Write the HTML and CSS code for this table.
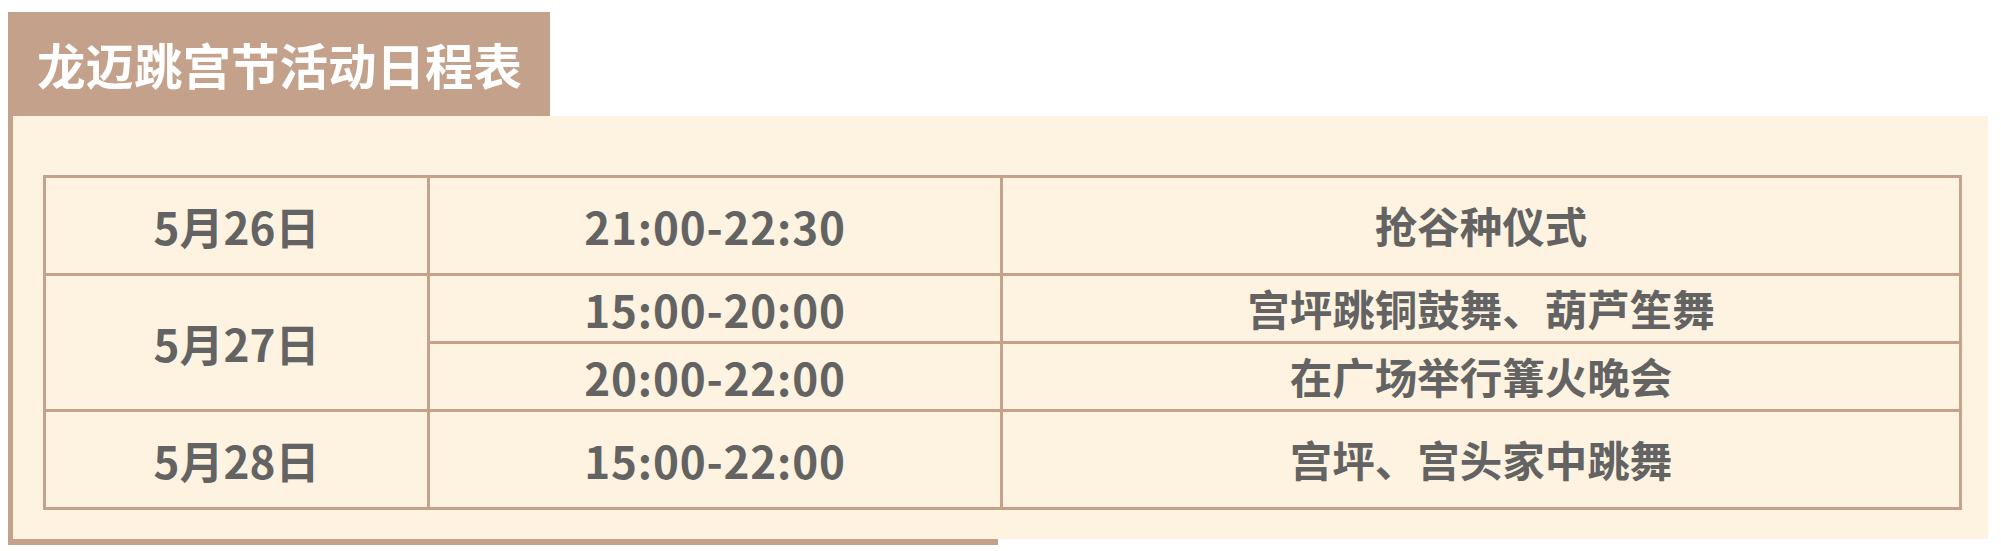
FILE: index.html
```html
<!DOCTYPE html>
<html lang="zh-CN">
<head>
<meta charset="utf-8">
<title>龙迈跳宫节活动日程表</title>
<link rel="stylesheet" href="styles.css">
</head>
<body>
<div class="page">
  <div class="title">龙迈跳宫节活动日程表</div>
  <div class="frame">
    <div class="panel">
      <table class="schedule">
        <colgroup>
          <col class="c-date">
          <col class="c-time">
          <col class="c-act">
        </colgroup>
        <tbody>
          <tr class="tall">
            <td class="date">5月26日</td>
            <td class="time">21:00-22:30</td>
            <td class="act">抢谷种仪式</td>
          </tr>
          <tr class="short">
            <td class="date" rowspan="2">5月27日</td>
            <td class="time">15:00-20:00</td>
            <td class="act">宫坪跳铜鼓舞、葫芦笙舞</td>
          </tr>
          <tr class="short">
            <td class="time">20:00-22:00</td>
            <td class="act">在广场举行篝火晚会</td>
          </tr>
          <tr class="tall">
            <td class="date">5月28日</td>
            <td class="time">15:00-22:00</td>
            <td class="act">宫坪、宫头家中跳舞</td>
          </tr>
        </tbody>
      </table>
    </div>
  </div>
</div>
</body>
</html>
```
FILE: styles.css
```css
html, body {
  margin: 0;
  padding: 0;
  background: #ffffff;
}

.page {
  padding: 12px 0 0 8px;
  font-family: "Noto Sans CJK SC", "Noto Sans", sans-serif;
}

.title {
  box-sizing: border-box;
  width: 542px;
  height: 104px;
  padding-left: 29px;
  background: #c4a18b;
  color: #ffffff;
  font-size: 48.5px;
  font-weight: 700;
  line-height: 104px;
  white-space: nowrap;
}

.frame {
  width: 985px;
  padding: 0 0 6px 5px;
  background: #c4a18b;
}

.panel {
  box-sizing: border-box;
  width: 1975px;
  height: 423px;
  padding: 59px 29px 29px 30px;
  background: #fef3e1;
}

.schedule {
  width: 1916px;
  table-layout: fixed;
  border-collapse: collapse;
  border: 3px solid #c4a18b;
}

.c-date { width: 384px; }
.c-time { width: 573px; }
.c-act  { width: 959px; }

.schedule td {
  border: 3px solid #c4a18b;
  padding: 0;
  text-align: center;
  vertical-align: middle;
  color: #636363;
  font-size: 44px;
  font-weight: 700;
  line-height: 1;
  white-space: nowrap;
}

.schedule td.time {
  letter-spacing: 0.8px;
}

.schedule td.act {
  font-size: 42.5px;
}

.tall { height: 98px; }
.short { height: 68px; }
```
